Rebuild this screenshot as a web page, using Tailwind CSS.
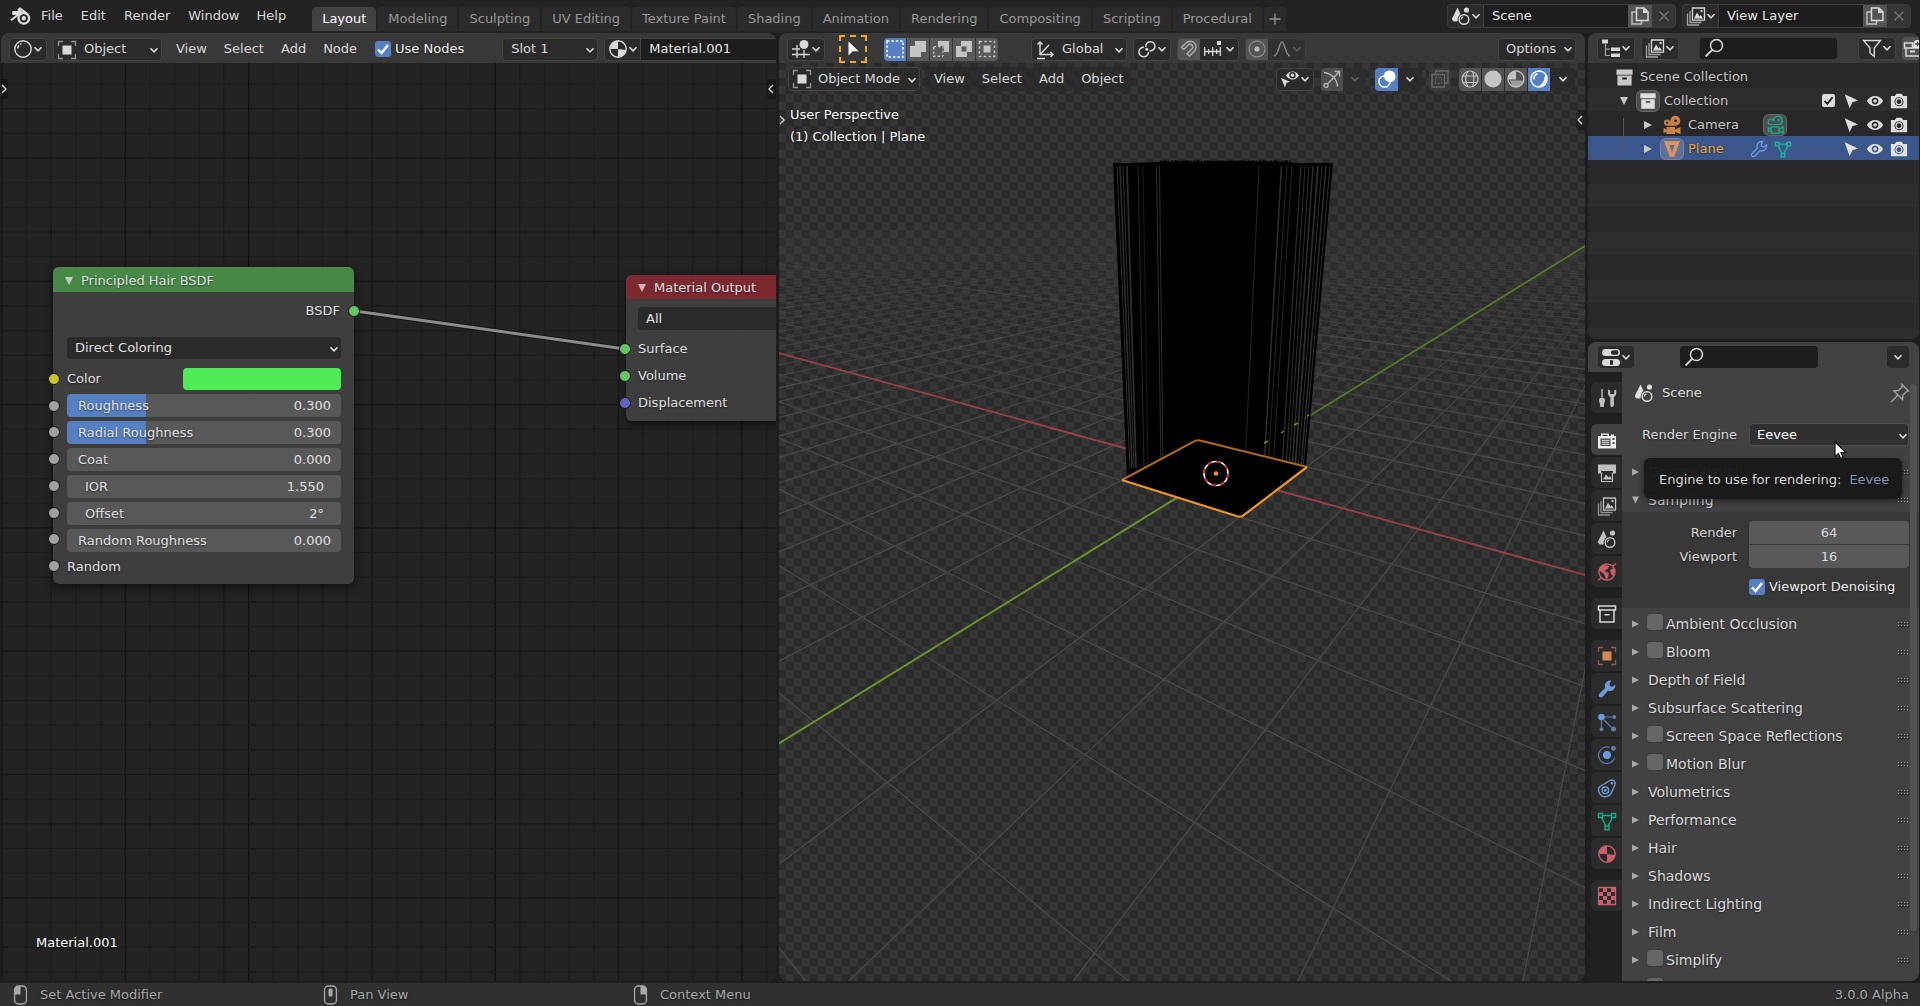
<!DOCTYPE html>
<html lang="en">
<head>
  <meta charset="UTF-8" />
  <title>Blender</title>
  <meta name="viewport" content="width=device-width, initial-scale=1.0" />
  <script src="https://cdn.jsdelivr.net/npm/@tailwindcss/browser@4"></script>
  <style>
    body { font-family: 'DejaVu Sans', 'Liberation Sans', sans-serif; }
  </style>
</head>

<body class="h-screen overflow-hidden flex flex-col bg-[#1e1e1e] text-[13px] leading-4 text-[#d9d9d9] [text-shadow:0_1px_2px_rgba(0,0,0,0.5)] cursor-default">

<!-- Icon set -->
<svg class="hidden">
  <symbol id="chev" viewBox="0 0 10 10"><path d="M1.5 3.2 5 6.8 8.5 3.2" fill="none" stroke="currentColor" stroke-width="1.6"/></symbol>
  <symbol id="check" viewBox="0 0 16 16"><path d="M3 8.5 6.5 12 13 4" fill="none" stroke="currentColor" stroke-width="2.4"/></symbol>
  <symbol id="blender" viewBox="0 0 22 20"><path d="M1 14.2 9 8H3.2V6H11L8.4 3.8 10 2.4l8 6.2" fill="none" stroke="currentColor" stroke-width="2" stroke-linejoin="round"/><circle cx="13.8" cy="12.3" r="5.3" fill="none" stroke="currentColor" stroke-width="2.3"/><circle cx="13.8" cy="12.3" r="2.2" fill="currentColor"/></symbol>
  <symbol id="shader" viewBox="0 0 20 20"><circle cx="10" cy="10" r="8.2" fill="none" stroke="currentColor" stroke-width="1.4"/><path d="M4.8 9.5A5.3 5.3 0 0 1 6 6.3M7.2 5.4l1.3-.8" fill="none" stroke="currentColor" stroke-width="1.7"/></symbol>
  <symbol id="object" viewBox="0 0 20 20"><path d="M5.5 5.5h9v9h-9z" fill="currentColor"/><path d="M1.5 6V1.5H6M14 1.5h4.500V6M18.500 14v4.500H14M6 18.500H1.500V14" fill="none" stroke="currentColor" stroke-width="1.3" opacity=".6"/></symbol>
  <symbol id="material" viewBox="0 0 20 20"><circle cx="10" cy="10" r="8.2" fill="none" stroke="currentColor" stroke-width="1.4"/><path d="M10 10H2a8 8 0 0 1 8-8zM10 10l8 1a8 8 0 0 1-8 7z" fill="currentColor"/></symbol>
  <symbol id="view3d" viewBox="0 0 20 20"><circle cx="13" cy="5.500" r="4.500" fill="currentColor"/><path d="M6 6v13M13 11v8M1 10h8M1 15.500h18" fill="none" stroke="currentColor" stroke-width="1.3"/></symbol>
  <symbol id="cursor" viewBox="0 0 20 20"><path d="M5.500 2.500v14l4.200-4.300h6z" fill="currentColor"/></symbol>
  <symbol id="pick" viewBox="0 0 20 20"><path d="M3 2.500 18 9.500l-6.500 2L8.500 18z" fill="currentColor"/></symbol>
  <symbol id="selnew" viewBox="0 0 20 20"><path d="M2 2h16v16H2z" fill="none" stroke="currentColor" stroke-width="1.600" stroke-dasharray="2.400 2"/></symbol>
  <symbol id="selext" viewBox="0 0 20 20"><path d="M7 2h11v11h-5v5H2V7h5z" fill="currentColor"/></symbol>
  <symbol id="selsub" viewBox="0 0 20 20"><path d="M7 2h11v11h-5V7H7z" fill="currentColor"/><path d="M2.700 8v9.300h9.300" fill="none" stroke="currentColor" stroke-width="1.500" stroke-dasharray="2.400 2"/><path d="M2.700 7.700h9.300V17" fill="none" stroke="currentColor" stroke-width="1.200" stroke-dasharray="2.400 2"/></symbol>
  <symbol id="selinv" viewBox="0 0 20 20"><path fill-rule="evenodd" d="M7 2h11v11h-5v5H2V7h5zM7.500 7.500v5h5v-5z" fill="currentColor"/></symbol>
  <symbol id="selint" viewBox="0 0 20 20"><path d="M6.500 6.500h7v7h-7z" fill="currentColor"/><path d="M2.500 2.500h15v15h-15z" fill="none" stroke="currentColor" stroke-width="1.500" stroke-dasharray="2.400 2.400"/></symbol>
  <symbol id="orient" viewBox="0 0 20 20"><path d="M5 2v12.500h13M5 14.500 14 5M2.500 4.500 5 2l2.500 2.500M15.500 12l2.500 2.500-2.500 2.500M10 18.500H2" fill="none" stroke="currentColor" stroke-width="1.400"/></symbol>
  <symbol id="pivot" viewBox="0 0 20 20"><path d="M12.500 11.800A4.600 4.600 0 1 0 8.800 8M7 8.200A4.800 4.800 0 1 0 11.500 13" fill="none" stroke="currentColor" stroke-width="1.500"/><circle cx="9.800" cy="10.300" r="1.500" fill="currentColor"/></symbol>
  <symbol id="magnet" viewBox="0 0 20 20"><path d="M2.500 8.200 7 4a5.800 5.800 0 0 1 8.500 8l-5 5-2.400-2.200 4.900-5a2.600 2.600 0 0 0-3.800-3.700L4.800 10.500z" fill="none" stroke="currentColor" stroke-width="1.500"/></symbol>
  <symbol id="snap" viewBox="0 0 20 20"><path d="M14 2h4v4h-4z" fill="currentColor"/><path d="M1 12.500h17M1.700 8v9M5.700 10v5M9.700 8v9M13.700 10v5M17.300 8v9" fill="none" stroke="currentColor" stroke-width="1.300"/></symbol>
  <symbol id="prop" viewBox="0 0 20 20"><circle cx="10" cy="10" r="8" fill="none" stroke="currentColor" stroke-width="1.300" opacity=".5"/><circle cx="10" cy="10" r="2.600" fill="currentColor"/></symbol>
  <symbol id="curve" viewBox="0 0 20 20"><path d="M2 17C7 16 7 3 10 3s3 13 8 14" fill="none" stroke="currentColor" stroke-width="1.500"/></symbol>
  <symbol id="eyecur" viewBox="0 0 20 20"><path d="M6 6.500C9 1 16 1 19 6.500 16 12 9 12 6 6.500z" fill="currentColor"/><circle cx="12.500" cy="6.300" r="3.200" fill="#2b2b2b"/><circle cx="12.500" cy="6.300" r="1.700" fill="currentColor"/><path d="M1 9l9 3.800-3.500 1L5 18.500z" fill="currentColor"/></symbol>
  <symbol id="gizmo" viewBox="0 0 20 20"><path d="M2 3.500a15 15 0 0 1 13.500 14M5.500 15 17 3M12.500 2.500H17.500V7.500" fill="none" stroke="currentColor" stroke-width="1.400"/><circle cx="4" cy="16.500" r="2" fill="none" stroke="currentColor" stroke-width="1.300"/></symbol>
  <symbol id="overlay" viewBox="0 0 20 20"><circle cx="12.500" cy="7.500" r="6" fill="currentColor"/><circle cx="7.500" cy="12.500" r="5.600" fill="none" stroke="currentColor" stroke-width="1.400"/><path d="M6.700 8.500a6 6 0 0 0 4.800 4.900" fill="none" stroke="#5680c2" stroke-width="1.300"/></symbol>
  <symbol id="xray" viewBox="0 0 20 20"><path d="M6 5V2h12v12h-3" fill="none" stroke="currentColor" stroke-width="1.300"/><path d="M2 5.500h12.500V18H2z" fill="none" stroke="currentColor" stroke-width="1.300"/><path d="M5.500 8.500h6v6h-6z" fill="none" stroke="currentColor" stroke-dasharray="2 1.500"/></symbol>
  <symbol id="wire" viewBox="0 0 20 20"><g fill="none" stroke="currentColor" stroke-width="1.200"><circle cx="10" cy="10" r="8"/><path d="M2.500 7h15M2.500 13.500h15M8 2.200c-3 5-3 11 0 15.600M12.500 2.500c2 5 2 10 0 15"/></g></symbol>
  <symbol id="solid" viewBox="0 0 20 20"><circle cx="10" cy="10" r="8.500" fill="currentColor"/></symbol>
  <symbol id="matprev" viewBox="0 0 20 20"><circle cx="10" cy="10" r="8" fill="none" stroke="currentColor" stroke-width="1.300"/><path d="M10 10.500V2a8 8 0 0 0-8 8.500z" fill="currentColor"/><path d="M4 11.500h13.800A8 8 0 0 1 6 16.500z" fill="currentColor" opacity=".65"/></symbol>
  <symbol id="rendered" viewBox="0 0 20 20"><circle cx="10" cy="10" r="8" fill="none" stroke="currentColor" stroke-width="1.500"/><path d="M5 10.500A5.500 5.500 0 0 1 8.500 4.800" fill="none" stroke="currentColor" stroke-width="1.600"/><path d="M16 5.500a8 8 0 0 1-9 11.800c5 .2 8.800-5 9-11.800z" fill="currentColor"/></symbol>
  <symbol id="scene" viewBox="0 0 20 20"><path d="M6.500 1.500 9.500 8c-2 1.500-3 4-2.800 7-2 1.200-5.700.8-5.700-2.500z" fill="currentColor"/><circle cx="15.500" cy="4" r="2.600" fill="currentColor"/><circle cx="13" cy="13.500" r="4.800" fill="none" stroke="currentColor" stroke-width="1.400"/><path d="M10.300 13.500a2.800 2.800 0 0 1 2-2.700" fill="none" stroke="currentColor" stroke-width="1.200"/></symbol>
  <symbol id="copy" viewBox="0 0 20 20"><path d="M6.500 2H14l4 4v8.500H6.500z" fill="none" stroke="currentColor" stroke-width="1.500"/><path d="M13 2v5h5z" fill="currentColor"/><path d="M6 6H2v12h9.500v-3" fill="none" stroke="currentColor" stroke-width="1.400" opacity=".8"/></symbol>
  <symbol id="x" viewBox="0 0 20 20"><path d="M5.500 5.500l9 9M14.500 5.500l-9 9" fill="none" stroke="currentColor" stroke-width="1.300"/></symbol>
  <symbol id="layers" viewBox="0 0 20 20"><path d="M6.500 2h12v12.200h-12z" fill="none" stroke="currentColor" stroke-width="1.300"/><path d="M8 12.500l3-6 2.500 4 1.200-1.500 2.300 3.500z" fill="currentColor"/><circle cx="15.500" cy="5" r="1.200" fill="currentColor"/><path d="M4 5v11.500h11.500M1.500 7.500V19H13" fill="none" stroke="currentColor" stroke-width="1.300" opacity=".7"/></symbol>
  <symbol id="outliner" viewBox="0 0 20 20"><path d="M1 1.500h6v4H1zM10 9.500h9V13h-9zM10 15.500h9V19h-9z" fill="currentColor"/><path d="M4.500 6v11.500H9M4.500 11.200H9" fill="none" stroke="currentColor" stroke-width="1.200" opacity=".7"/></symbol>
  <symbol id="search" viewBox="0 0 20 20"><circle cx="12.500" cy="7.500" r="6" fill="none" stroke="currentColor" stroke-width="1.500"/><path d="M8.200 11.800 1.500 18.500" stroke="currentColor" stroke-width="1.800"/></symbol>
  <symbol id="filter" viewBox="0 0 20 20"><path d="M1.500 2.500h17L12.300 10v8.500L8 15v-5z" fill="none" stroke="currentColor" stroke-width="1.400"/></symbol>
  <symbol id="newcol" viewBox="0 0 20 20"><path d="M2.500 5h8v3.500h7V10h-15zM4 10v8h13" fill="none" stroke="currentColor" stroke-width="1.500"/><path d="M8 13.500h5" stroke="currentColor" stroke-width="2"/><circle cx="15.500" cy="6" r="4" fill="#eee"/><path d="M15.500 3.500v5M13 6h5" stroke="#444" stroke-width="1.300"/></symbol>
  <symbol id="collection" viewBox="0 0 20 20"><path d="M1.500 1.500h17V7h-17z" fill="currentColor"/><path fill-rule="evenodd" d="M2.500 8h15v10.500h-15zM7.500 10v2h5v-2z" fill="currentColor"/></symbol>
  <symbol id="collout" viewBox="0 0 20 20"><path d="M1.500 2h17v4h-17zM3 6v12h14V6" fill="none" stroke="currentColor" stroke-width="1.500"/><path d="M7.500 10h5v1.500h-5z" fill="currentColor"/></symbol>
  <symbol id="camera" viewBox="0 0 20 20"><path fill-rule="evenodd" d="M5 4.500a3.500 3.500 0 0 1 3.400 2A5 5 0 1 1 14 10.700H5A3.100 3.100 0 0 1 5 4.500zM5 6.500a1.200 1.200 0 1 0 .1 0zM13.500 4.300a1.500 1.500 0 1 0 .1 0zM4.500 12H13v2.500l5.500-2.500v7L13 17v2H4.500v-2L1.500 18v-5l3 1.500z" fill="currentColor"/></symbol>
  <symbol id="camdata" viewBox="0 0 20 20"><g fill="none" stroke="currentColor" stroke-width="1.300"><path d="M4.500 4.500a3 3 0 0 1 3.500 1.800A4.500 4.500 0 1 1 14 10H4.500a2.800 2.800 0 0 1 0-5.500z"/><path d="M5.500 12.500h8V19h-8zM13.500 15l4.500-2.500v6.500L13.500 17M5.500 15 2.500 13.500v4l3-1"/></g><circle cx="13.500" cy="5.500" r="1.200" fill="currentColor"/></symbol>
  <symbol id="plane" viewBox="0 0 20 20"><path fill-rule="evenodd" d="M1 1h18l-6.500 18h-5zM7 5.500 10 14l3-8.500z" fill="currentColor"/></symbol>
  <symbol id="mesh" viewBox="0 0 20 20"><g fill="none" stroke="currentColor" stroke-width="1.400"><path d="M1.500 2.500h4v4h-4zM14.500 2.500h4v4h-4zM8 15h4v3.800H8zM5.500 4.500h9M4.500 6.500 9 15M15.500 6.500 11 15"/></g></symbol>
  <symbol id="wrench" viewBox="0 0 20 20"><path d="M18.300 5.500a5.500 5.500 0 0 1-7.300 6.300L5.500 17.800c-2 2-5-.8-3.200-3L8.200 9a5.500 5.500 0 0 1 6-7.500L12.500 5l.5 2.200 2.200.500z" fill="currentColor"/></symbol>
  <symbol id="wrenchout" viewBox="0 0 20 20"><path d="M18.300 5.500a5.500 5.500 0 0 1-7.300 6.300L5.500 17.800c-2 2-5-.8-3.200-3L8.200 9a5.500 5.500 0 0 1 6-7.500L12.500 5l.5 2.200 2.200.500z" fill="none" stroke="currentColor" stroke-width="1.400"/></symbol>
  <symbol id="eye" viewBox="0 0 20 20"><path fill-rule="evenodd" d="M1 10C5 2.500 15 2.500 19 10 15 17.500 5 17.500 1 10zM10 6.200a3.800 3.800 0 1 0 .1 0z" fill="currentColor"/><circle cx="10" cy="10" r="2" fill="currentColor"/></symbol>
  <symbol id="photo" viewBox="0 0 20 20"><path fill-rule="evenodd" d="M1 4.500h4.500L7 2h6l1.500 2.500H19V18H1zM10 5.700a5 5 0 1 0 .1 0z" fill="currentColor"/><circle cx="10" cy="10.700" r="3.300" fill="none" stroke="currentColor" stroke-width="1.300"/></symbol>
  <symbol id="props" viewBox="0 0 20 20"><rect x="1" y="2" width="18" height="7" rx="3.500" fill="currentColor"/><rect x="10" y="3.200" width="7.500" height="4.600" rx="2.200" fill="#2b2b2b"/><rect x="1" y="12" width="18" height="7" rx="3.500" fill="currentColor"/><rect x="9" y="13.200" width="3" height="4.600" fill="#2b2b2b"/></symbol>
  <symbol id="tool" viewBox="0 0 20 20"><path d="M5 1v8" stroke="currentColor" stroke-width="1.400"/><path d="M2 12.500c0-2 1-3 3-3s3 1 3 3-1 2-1 4 0 2.500-2 2.500-2-.5-2-2.500-1-2-1-4z" fill="currentColor"/><path d="M11 1.500v4c0 2 1.500 3 2.300 3.500v8c0 2.500 3.600 2.500 3.600 0V9c.8-.5 2.300-1.500 2.300-3.500v-4l-2 1v3.500h-4V2.500z" fill="currentColor"/></symbol>
  <symbol id="render" viewBox="0 0 20 20"><path fill-rule="evenodd" d="M1 6h3V3.500h8V6h2V4.500h3V6h2v12.500H1zM5.500 4.700V6h5V4.700zM3.500 8.500v7.500h10V8.500zM15.500 8v2h2V8zM15.500 12v2h2v-2z" fill="currentColor"/><path d="M4.500 10.300h8M4.500 12.300h8M4.500 14.300h8" stroke="currentColor"/></symbol>
  <symbol id="output" viewBox="0 0 20 20"><path d="M1 1.500h18v9h-3V8H4v2.500H1z" fill="currentColor"/><path d="M4.500 9.500v9h11v-9" fill="none" stroke="currentColor" stroke-width="1.200"/><path d="M6 16.500l3-5 2.500 3 1.500-1.500 2 3.500z" fill="currentColor"/></symbol>
  <symbol id="world" viewBox="0 0 20 20"><circle cx="10" cy="10" r="8" fill="none" stroke="currentColor" stroke-width="1.400"/><path d="M3 5l4-2 5 1-1 3-3 1 1 2 3 1-1 5-2 1-2-5-4-3zM13 8l4-2 1 5-2 3-2-2z" fill="currentColor"/><path d="M15.500 4.500 19 1.500M4.500 15.500 1 18.500" stroke="currentColor" stroke-width="1.500"/></symbol>
  <symbol id="particles" viewBox="0 0 20 20"><circle cx="4.500" cy="5" r="3.300" fill="currentColor"/><g opacity=".75"><path d="M8 5h9M4.500 8v9M7 8l8.500 8.500" stroke="currentColor" stroke-width="1.200"/><circle cx="17.300" cy="5" r="1.900" fill="currentColor"/><circle cx="4.500" cy="17.300" r="1.900" fill="currentColor"/><circle cx="16.500" cy="17" r="2.500" fill="currentColor"/></g></symbol>
  <symbol id="physics" viewBox="0 0 20 20"><circle cx="10" cy="10" r="4" fill="currentColor"/><path d="M12.500 2.300A8.300 8.300 0 1 0 17.800 12.500" fill="none" stroke="currentColor" stroke-width="1.300" opacity=".75"/><circle cx="16.500" cy="3.500" r="2.400" fill="currentColor" opacity=".75"/></symbol>
  <symbol id="constraint" viewBox="0 0 20 20"><g fill="none" stroke="currentColor" stroke-width="1.400"><path d="M2.300 9 13 2.500a3.400 3.400 0 0 1 5 4L14.300 15a6.300 6.300 0 1 1-12-6z"/><circle cx="8.300" cy="12.300" r="3.300"/></g><circle cx="8.300" cy="12.300" r="1.400" fill="currentColor"/><circle cx="15" cy="5.300" r="1.300" fill="currentColor"/></symbol>
  <symbol id="texture" viewBox="0 0 20 20"><path d="M1.500 1.500h17v17h-17z" fill="none" stroke="currentColor" stroke-width="1.300"/><path d="M6 2h4v4H6zM14 2h4v4h-4zM2 6h4v4H2zM10 6h4v4h-4zM6 10h4v4H6zM14 10h4v4h-4zM2 14h4v4H2zM10 14h4v4h-4z" fill="currentColor"/></symbol>
  <symbol id="pin" viewBox="0 0 20 20"><path d="M12 1.500 18.500 8l-2 .5-3.500 3.500-.500 4.500L4 8l4.500-.5L12 4zM8 12l-7 7" fill="none" stroke="currentColor" stroke-width="1.300"/></symbol>
  <symbol id="mouse" viewBox="0 0 14 20"><rect x="1" y="1" width="12" height="18" rx="4" fill="none" stroke="currentColor" stroke-width="1.400"/></symbol>
  <symbol id="grip" viewBox="0 0 11 6"><path d="M0 1.500h11M0 4.500h11" stroke="#9a9a9a" stroke-dasharray="1 2"/><path d="M1 2.500h10M1 5.500h10" stroke="#1c1c1c" stroke-dasharray="1 2"/></symbol>
</svg>

<!-- Top bar -->
<header class="h-[33px] shrink-0 flex items-start bg-[#232323] pl-[10px] pr-[9px]">
  <svg class="w-[22px] h-5 mt-[6px] text-[#e0e0e0]"><use href="#blender"/></svg>
  <nav class="flex h-[31px] items-center">
    <button class="px-[9px]">File</button>
    <button class="px-[9px]">Edit</button>
    <button class="px-[9px]">Render</button>
    <button class="px-[9px]">Window</button>
    <button class="px-2">Help</button>
  </nav>
  <div class="flex gap-[2px] mt-[7px] ml-[18px] text-[#989898]">
    <button class="h-6 px-[10px] rounded-t bg-[#424242] text-white">Layout</button>
    <button class="h-6 px-[10px] rounded-t bg-[#2b2b2b]">Modeling</button>
    <button class="h-6 px-[10px] rounded-t bg-[#2b2b2b]">Sculpting</button>
    <button class="h-6 px-[10px] rounded-t bg-[#2b2b2b]">UV Editing</button>
    <button class="h-6 px-[10px] rounded-t bg-[#2b2b2b]">Texture Paint</button>
    <button class="h-6 px-[10px] rounded-t bg-[#2b2b2b]">Shading</button>
    <button class="h-6 px-[10px] rounded-t bg-[#2b2b2b]">Animation</button>
    <button class="h-6 px-[10px] rounded-t bg-[#2b2b2b]">Rendering</button>
    <button class="h-6 px-[10px] rounded-t bg-[#2b2b2b]">Compositing</button>
    <button class="h-6 px-[10px] rounded-t bg-[#2b2b2b]">Scripting</button>
    <button class="h-6 px-[10px] rounded-t bg-[#2b2b2b]">Procedural</button>
    <button class="h-6 w-[22px] rounded-t bg-[#2b2b2b] flex items-center justify-center" aria-label="Add workspace">
      <svg class="w-4 h-4" viewBox="0 0 16 16"><path d="M8 2.500v11M2.500 8h11" stroke="currentColor" stroke-width="1.300"/></svg>
    </button>
  </div>
  <div class="flex gap-[6px] ml-auto mt-1">
    <div class="flex h-6 rounded border border-[#3d3d3d] bg-[#2b2b2b] overflow-hidden">
      <button class="w-9 flex items-center justify-center border-r border-[#3d3d3d]" aria-label="Browse scene"><svg class="w-5 h-5"><use href="#scene"/></svg><svg class="w-[10px] h-[10px]"><use href="#chev"/></svg></button>
      <input class="w-36 bg-[#1d1d1d] pl-2 text-[#e6e6e6] outline-none" value="Scene" aria-label="Scene" />
      <button class="w-6 bg-[#545454] flex items-center justify-center" aria-label="New scene"><svg class="w-5 h-5"><use href="#copy"/></svg></button>
      <button class="w-[23px] bg-[#353535] text-[#777] flex items-center justify-center" aria-label="Delete scene"><svg class="w-5 h-5"><use href="#x"/></svg></button>
    </div>
    <div class="flex h-6 rounded border border-[#3d3d3d] bg-[#2b2b2b] overflow-hidden">
      <button class="w-9 flex items-center justify-center border-r border-[#3d3d3d]" aria-label="Browse view layer"><svg class="w-5 h-5"><use href="#layers"/></svg><svg class="w-[10px] h-[10px]"><use href="#chev"/></svg></button>
      <input class="w-36 bg-[#1d1d1d] pl-2 text-[#e6e6e6] outline-none" value="View Layer" aria-label="View layer" />
      <button class="w-6 bg-[#545454] flex items-center justify-center" aria-label="New view layer"><svg class="w-5 h-5"><use href="#copy"/></svg></button>
      <button class="w-[23px] bg-[#353535] text-[#777] flex items-center justify-center" aria-label="Delete view layer"><svg class="w-5 h-5"><use href="#x"/></svg></button>
    </div>
  </div>
</header>

<main class="flex-1 min-h-0 grid grid-cols-[775fr_806fr_331fr] grid-rows-[minmax(0,1fr)] gap-[3px] px-px pb-[2px]">

  <!-- Shader editor -->
  <section class="relative min-w-0 flex flex-col rounded-lg overflow-hidden bg-[#232323]">
    <div class="h-[30px] shrink-0 flex items-center bg-[#383838] pl-2 pt-[2px]">
      <button class="w-[38px] shrink-0 h-[23px] rounded border border-[#434343] bg-[#2b2b2b] flex items-center justify-center" aria-label="Editor type"><svg class="w-5 h-5"><use href="#shader"/></svg><svg class="w-[10px] h-[10px]"><use href="#chev"/></svg></button>
      <div class="relative ml-[6px] w-[109px] shrink-0">
        <select class="appearance-none w-full h-[23px] rounded border border-[#434343] bg-[#2b2b2b] pl-[30px] outline-none" aria-label="Shader type"><option>Object</option></select>
        <svg class="absolute left-1 top-[2px] w-5 h-5 pointer-events-none"><use href="#object"/></svg>
        <svg class="absolute right-[3px] top-[7px] w-[10px] h-[10px] pointer-events-none"><use href="#chev"/></svg>
      </div>
      <nav class="flex ml-[5px]">
        <button class="px-[9px]">View</button>
        <button class="px-2">Select</button>
        <button class="px-[9px]">Add</button>
        <button class="px-2">Node</button>
      </nav>
      <label class="flex items-center ml-[10px] shrink-0 text-[#f0f0f0]">
        <span class="relative w-4 h-4 mr-1">
          <input type="checkbox" checked class="appearance-none block w-4 h-4 rounded-[3px] bg-[#5680c2]" />
          <svg class="absolute inset-0 w-4 h-4 text-white"><use href="#check"/></svg>
        </span>
        Use Nodes
      </label>
      <div class="relative ml-[38px] w-24 shrink-0">
        <select class="appearance-none w-full h-[23px] rounded border border-[#434343] bg-[#2b2b2b] pl-2 outline-none" aria-label="Material slot"><option>Slot 1</option></select>
        <svg class="absolute right-[3px] top-[7px] w-[10px] h-[10px] pointer-events-none"><use href="#chev"/></svg>
      </div>
      <div class="flex-1 min-w-0 ml-[6px] flex h-[23px] rounded-l border border-r-0 border-[#434343] bg-[#2b2b2b]">
        <button class="w-9 shrink-0 flex items-center justify-center border-r border-[#434343]" aria-label="Browse material"><svg class="w-5 h-5"><use href="#material"/></svg><svg class="w-[10px] h-[10px]"><use href="#chev"/></svg></button>
        <input class="flex-1 min-w-0 bg-[#1d1d1d] pl-2 text-[#e6e6e6] outline-none" value="Material.001" aria-label="Material" />
      </div>
    </div>

    <div class="relative flex-1 min-h-0 overflow-hidden">
      <svg id="node-grid" class="absolute left-0 top-0 w-full h-full"></svg>
      <button class="absolute left-0 top-4 w-[7px] h-5 rounded-r bg-black/30 flex items-center" aria-label="Show toolbar"><svg class="w-[7px] h-3" viewBox="0 0 7 12"><path d="M1 2l4 4-4 4" fill="none" stroke="currentColor" stroke-width="1.300"/></svg></button>
      <button class="absolute right-0 top-4 w-[9px] h-5 rounded-l bg-black/30 flex items-center" aria-label="Show sidebar"><svg class="w-[7px] h-3" viewBox="0 0 7 12"><path d="M6 2 2 6l4 4" fill="none" stroke="currentColor" stroke-width="1.300"/></svg></button>

      <!-- Principled Hair BSDF -->
      <article class="absolute left-[52px] top-[204px] w-[301px] h-[317px] rounded-md bg-[#404040]/95 shadow-[0_3px_8px_rgba(0,0,0,0.6)] text-[#e0e0e0]">
        <h2 class="h-[25px] pt-[2px] flex items-center rounded-t-md bg-[#478a47] pl-3"><svg class="w-2 h-2 mr-2 text-[#b9d3b9]" viewBox="0 0 8 8"><path d="M0 0h8L4 8z" fill="currentColor"/></svg>Principled Hair BSDF</h2>
        <div class="h-9 pt-[2px] pr-[14px] flex items-center justify-end">BSDF</div>
        <div class="pl-[14px] pr-[13px] pt-[9px]">
          <div class="relative">
            <select class="appearance-none w-full h-[22px] rounded bg-[#2a2a2a] pl-2 outline-none" aria-label="Coloring"><option>Direct Coloring</option></select>
            <svg class="absolute right-[2px] top-[7px] w-[10px] h-[10px] pointer-events-none"><use href="#chev"/></svg>
          </div>
          <div class="flex items-center justify-between h-[22px] mt-[9px]">Color <button class="w-[158px] h-[22px] rounded bg-[#50ec57]" aria-label="Color"></button></div>
          <div class="flex flex-col gap-1 mt-1">
            <label class="h-[23px] rounded bg-[linear-gradient(90deg,#5680c2_29%,#585858_29%)] flex items-center pl-[11px] pr-[10px] whitespace-nowrap">Roughness<input class="flex-1 min-w-0 text-right outline-none" value="0.300" /></label>
            <label class="h-[23px] rounded bg-[linear-gradient(90deg,#5680c2_29%,#585858_29%)] flex items-center pl-[11px] pr-[10px] whitespace-nowrap">Radial Roughness<input class="flex-1 min-w-0 text-right outline-none" value="0.300" /></label>
            <label class="h-[23px] rounded bg-[#585858] flex items-center pl-[11px] pr-[10px] whitespace-nowrap">Coat<input class="flex-1 min-w-0 text-right outline-none" value="0.000" /></label>
            <label class="h-[23px] rounded bg-[#585858] flex items-center pl-[18px] pr-[17px] whitespace-nowrap">IOR<input class="flex-1 min-w-0 text-right outline-none" value="1.550" /></label>
            <label class="h-[23px] rounded bg-[#585858] flex items-center pl-[18px] pr-[17px] whitespace-nowrap">Offset<input class="flex-1 min-w-0 text-right outline-none" value="2°" /></label>
            <label class="h-[23px] rounded bg-[#585858] flex items-center pl-[11px] pr-[10px] whitespace-nowrap">Random Roughness<input class="flex-1 min-w-0 text-right outline-none" value="0.000" /></label>
            <div class="h-[21px] flex items-center">Random</div>
          </div>
        </div>
      </article>

      <!-- Material Output -->
      <article class="absolute left-[625px] top-[212px] w-[190px] h-[146px] rounded-md bg-[#404040]/95 shadow-[0_3px_8px_rgba(0,0,0,0.6)] text-[#e0e0e0]">
        <h2 class="h-6 pt-[2px] flex items-center rounded-t-md bg-[#7d2930] pl-3"><svg class="w-2 h-2 mr-2 text-[#d8b4b7]" viewBox="0 0 8 8"><path d="M0 0h8L4 8z" fill="currentColor"/></svg>Material Output</h2>
        <div class="px-3 pt-2">
          <select class="appearance-none w-full h-[23px] rounded bg-[#2a2a2a] pl-2 outline-none" aria-label="Target"><option>All</option></select>
          <ul class="mt-[5px]">
            <li class="h-[27px] flex items-center">Surface</li>
            <li class="h-[27px] flex items-center">Volume</li>
            <li class="h-[27px] flex items-center">Displacement</li>
          </ul>
        </div>
      </article>

      <!-- Link and sockets, origin is the top left of the node canvas -->
      <svg class="absolute left-0 top-0 w-full h-full pointer-events-none">
        <path d="M354 248 624 286" stroke="#161616" stroke-width="5"/>
        <path d="M354 248 624 286" stroke="#8c8c8c" stroke-width="3"/>
        <g stroke="#111" stroke-width="1">
          <g fill="#63c763"><circle cx="353" cy="248" r="5.500"/><circle cx="624" cy="286" r="5.500"/><circle cx="624" cy="313" r="5.500"/></g>
          <circle cx="624" cy="340" r="5.500" fill="#6363c7"/>
          <circle cx="53" cy="316" r="5.500" fill="#c7c729"/>
          <g fill="#a1a1a1"><circle cx="53" cy="343" r="5.500"/><circle cx="53" cy="369" r="5.500"/><circle cx="53" cy="396" r="5.500"/><circle cx="53" cy="423" r="5.500"/><circle cx="53" cy="450" r="5.500"/><circle cx="53" cy="476" r="5.500"/><circle cx="53" cy="503" r="5.500"/></g>
        </g>
      </svg>
      <p class="absolute left-[35px] bottom-[30px] text-white">Material.001</p>
    </div>
  </section>

  <!-- 3D viewport -->
  <section class="relative min-w-0 flex flex-col rounded-lg overflow-hidden bg-[conic-gradient(#353535_25%,#2b2b2b_0_50%,#353535_0_75%,#2b2b2b_0)] bg-[size:16px_16px] bg-[position:7px_5px]">
    <svg class="absolute left-0 top-0 w-full h-full" viewBox="779 33 806 948" preserveAspectRatio="xMidYMid slice">
      <defs>
        <linearGradient id="fade" gradientUnits="userSpaceOnUse" x1="0" y1="200" x2="0" y2="440">
          <stop offset="0" stop-color="#000"/><stop offset="0.300" stop-color="#444"/><stop offset="1" stop-color="#fff"/>
        </linearGradient>
        <mask id="fademask" maskUnits="userSpaceOnUse" x="779" y="33" width="806" height="948"><path d="M779 33h806v948H779z" fill="url(#fade)"/></mask>
      </defs>
      <g id="floor" mask="url(#fademask)" stroke="#484848" stroke-width="1.400"></g>
      <path d="M779 353 1585 575" stroke="#98404c" stroke-width="1.800"/>
      <path d="M779 743.500 1216 473.500" stroke="#6c932c" stroke-width="2"/>
      <path d="M1216 473.500 1585 246" stroke="#587827" stroke-width="1.800"/>
      <!-- Hair strands -->
      <path d="M1129 163 1160 162 1230 161 1280 162 1302 163 1284 470 1240 517 1133 478z" fill="#000"/>
      <path d="M1113 163h20l6 310-12 5zM1300 163h33l-27 303-26 1z" fill="#000"/>
      <path d="M1160 161.500h130" stroke="#000" stroke-width="2" stroke-dasharray="2 1 4 1 1 2"/>
      <g id="slits" stroke="#2e2e2e" fill="none"></g>
      <path d="M1122 480 1197 440 1307 467 1240 517z" fill="#000"/>
      <path d="M1122 480 1194 441.500Q1197 439.500 1200 440.500L1307 467" fill="none" stroke="#b06a1e" stroke-width="2"/>
      <path d="M1307 467 1242 516.500 1238 516.500 1122 480" fill="none" stroke="#f0932b" stroke-width="2.200"/>
      <path d="M1307 416l2-1M1294 425l4-2M1281 433l3-2M1264 443l4-2" stroke="#6c932c" stroke-width="1.500"/>
      <circle cx="1216" cy="473.500" r="12" fill="none" stroke="#fff" stroke-width="1.600"/>
      <circle cx="1216" cy="473.500" r="12" fill="none" stroke="#e8101c" stroke-width="1.600" stroke-dasharray="4.700 4.700"/>
      <circle cx="1216" cy="473.500" r="2.300" fill="#f0932b"/>
    </svg>

    <div class="relative h-[30px] shrink-0 flex items-center bg-[#383838] pl-2 pt-[2px] pr-[9px]">
      <button class="w-[38px] h-[23px] rounded border border-[#434343] bg-[#2b2b2b] flex items-center justify-center" aria-label="Editor type"><svg class="w-5 h-5"><use href="#view3d"/></svg><svg class="w-[10px] h-[10px]"><use href="#chev"/></svg></button>
      <button class="w-7 h-7 ml-[14px] border-2 border-dashed border-[#f5a623] flex items-center justify-center text-white" aria-label="Select tool"><svg class="w-5 h-5"><use href="#cursor"/></svg></button>
      <div class="flex ml-[17px] h-[23px] rounded overflow-hidden gap-px bg-[#383838] text-[#c4c4c4]">
        <button class="w-[22px] bg-[#5680c2] text-white flex items-center justify-center" aria-label="Set selection"><svg class="w-5 h-5"><use href="#selnew"/></svg></button>
        <button class="w-[22px] bg-[#595959] flex items-center justify-center" aria-label="Extend selection"><svg class="w-5 h-5"><use href="#selext"/></svg></button>
        <button class="w-[22px] bg-[#595959] flex items-center justify-center" aria-label="Subtract selection"><svg class="w-5 h-5"><use href="#selsub"/></svg></button>
        <button class="w-[22px] bg-[#595959] flex items-center justify-center" aria-label="Invert selection"><svg class="w-5 h-5"><use href="#selinv"/></svg></button>
        <button class="w-[22px] bg-[#595959] flex items-center justify-center" aria-label="Intersect selection"><svg class="w-5 h-5"><use href="#selint"/></svg></button>
      </div>
      <div class="relative ml-[33px] w-24">
        <select class="appearance-none w-full h-[23px] rounded border border-[#434343] bg-[#2b2b2b] pl-[30px] outline-none" aria-label="Orientation"><option>Global</option></select>
        <svg class="absolute left-1 top-[2px] w-5 h-5 pointer-events-none"><use href="#orient"/></svg>
        <svg class="absolute right-[3px] top-[7px] w-[10px] h-[10px] pointer-events-none"><use href="#chev"/></svg>
      </div>
      <button class="ml-[6px] w-[38px] h-[23px] rounded border border-[#434343] bg-[#2b2b2b] flex items-center justify-center" aria-label="Pivot point"><svg class="w-5 h-5"><use href="#pivot"/></svg><svg class="w-[10px] h-[10px]"><use href="#chev"/></svg></button>
      <div class="ml-[6px] flex h-[23px] rounded overflow-hidden border border-[#434343] bg-[#2b2b2b]">
        <button class="w-[22px] bg-[#545454] text-[#aaa] flex items-center justify-center" aria-label="Snap"><svg class="w-5 h-5"><use href="#magnet"/></svg></button>
        <button class="w-[38px] flex items-center justify-center" aria-label="Snap to"><svg class="w-5 h-5"><use href="#snap"/></svg><svg class="w-[10px] h-[10px] ml-[2px]"><use href="#chev"/></svg></button>
      </div>
      <div class="ml-[6px] flex h-[23px] rounded overflow-hidden border border-[#3e3e3e] bg-[#313131]">
        <button class="w-[22px] bg-[#545454] text-[#bbb] flex items-center justify-center" aria-label="Proportional editing"><svg class="w-5 h-5"><use href="#prop"/></svg></button>
        <button class="w-[37px] text-[#858585] flex items-center justify-center" aria-label="Falloff"><svg class="w-5 h-5"><use href="#curve"/></svg><svg class="w-[10px] h-[10px] opacity-50"><use href="#chev"/></svg></button>
      </div>
      <button class="ml-auto w-[78px] h-[23px] rounded border border-[#434343] bg-[#2b2b2b] flex items-center justify-between pl-[7px] pr-[2px]">Options<svg class="w-[10px] h-[10px]"><use href="#chev"/></svg></button>
    </div>

    <div class="relative flex items-center pt-1 pl-[9px] pr-[10px]">
      <div class="relative w-[132px]">
        <select class="appearance-none w-full h-6 rounded border border-[#434343] bg-[#2b2b2b] pl-[29px] outline-none" aria-label="Mode"><option>Object Mode</option></select>
        <svg class="absolute left-1 top-[2px] w-5 h-5 pointer-events-none"><use href="#object"/></svg>
        <svg class="absolute right-[3px] top-2 w-[10px] h-[10px] pointer-events-none"><use href="#chev"/></svg>
      </div>
      <nav class="flex ml-[5px]">
        <button class="px-[9px] h-6 rounded bg-[#2b2b2b]/70">View</button>
        <button class="px-2 h-6 rounded bg-[#2b2b2b]/70">Select</button>
        <button class="px-[9px] h-6 rounded bg-[#2b2b2b]/70">Add</button>
        <button class="px-2 h-6 rounded bg-[#2b2b2b]/70">Object</button>
      </nav>
      <button class="ml-auto w-[38px] h-[23px] rounded border border-[#434343] bg-[#2b2b2b] flex items-center justify-center" aria-label="Object visibility"><svg class="w-5 h-5"><use href="#eyecur"/></svg><svg class="w-[10px] h-[10px]"><use href="#chev"/></svg></button>
      <div class="ml-[7px] flex h-[23px] rounded overflow-hidden bg-[#2e2e2e]">
        <button class="w-[22px] bg-[#4d4d4d] text-[#b5b5b5] flex items-center justify-center" aria-label="Gizmos"><svg class="w-5 h-5"><use href="#gizmo"/></svg></button>
        <button class="w-[23px] flex items-center justify-center" aria-label="Gizmo options"><svg class="w-[10px] h-[10px] opacity-30"><use href="#chev"/></svg></button>
      </div>
      <div class="ml-[9px] flex h-[23px] rounded overflow-hidden bg-[#2b2b2b]">
        <button class="w-[23px] bg-[#5680c2] text-white flex items-center justify-center" aria-label="Overlays"><svg class="w-5 h-5"><use href="#overlay"/></svg></button>
        <button class="w-6 flex items-center justify-center" aria-label="Overlay options"><svg class="w-[10px] h-[10px]"><use href="#chev"/></svg></button>
      </div>
      <button class="ml-[7px] w-[22px] h-[23px] rounded bg-[#3a3a3a] text-[#6a6a6a] flex items-center justify-center" aria-label="X-ray"><svg class="w-5 h-5"><use href="#xray"/></svg></button>
      <div class="ml-2 flex h-[23px] rounded overflow-hidden gap-px bg-[#2b2b2b] text-[#c4c4c4]">
        <button class="w-[22px] bg-[#545454] flex items-center justify-center" aria-label="Wireframe"><svg class="w-5 h-5"><use href="#wire"/></svg></button>
        <button class="w-[22px] bg-[#545454] flex items-center justify-center" aria-label="Solid"><svg class="w-5 h-5"><use href="#solid"/></svg></button>
        <button class="w-[22px] bg-[#545454] flex items-center justify-center" aria-label="Material preview"><svg class="w-5 h-5"><use href="#matprev"/></svg></button>
        <button class="w-[22px] bg-[#5680c2] text-white flex items-center justify-center" aria-label="Rendered"><svg class="w-5 h-5"><use href="#rendered"/></svg></button>
        <button class="w-6 flex items-center justify-center text-[#e6e6e6]" aria-label="Shading options"><svg class="w-[10px] h-[10px]"><use href="#chev"/></svg></button>
      </div>
    </div>

    <div class="relative pt-[13px] pl-[11px] text-white leading-[22px]">
      <p>User Perspective</p>
      <p>(1) Collection | Plane</p>
    </div>
    <button class="absolute left-0 top-[77px] w-[7px] h-5 flex items-center" aria-label="Show toolbar"><svg class="w-[7px] h-3" viewBox="0 0 7 12"><path d="M1 2l4 4-4 4" fill="none" stroke="currentColor" stroke-width="1.300"/></svg></button>
    <button class="absolute right-0 top-[77px] w-[9px] h-5 rounded-l bg-black/30 flex items-center" aria-label="Show sidebar"><svg class="w-[7px] h-3" viewBox="0 0 7 12"><path d="M6 2 2 6l4 4" fill="none" stroke="currentColor" stroke-width="1.300"/></svg></button>
  </section>

  <div class="min-w-0 grid grid-rows-[306fr_639fr] gap-[3px]">

    <!-- Outliner -->
    <section class="min-h-0 flex flex-col rounded-lg overflow-hidden bg-[#282828]">
      <div class="h-[30px] shrink-0 flex items-center bg-[#3a3a3a] pl-[9px]">
        <button class="w-[38px] shrink-0 h-[23px] rounded border border-[#434343] bg-[#2b2b2b] flex items-center justify-center" aria-label="Editor type"><svg class="w-5 h-5"><use href="#outliner"/></svg><svg class="w-[10px] h-[10px]"><use href="#chev"/></svg></button>
        <button class="w-[38px] shrink-0 ml-[6px] h-[23px] rounded border border-[#434343] bg-[#2b2b2b] flex items-center justify-center" aria-label="Display mode"><svg class="w-5 h-5"><use href="#layers"/></svg><svg class="w-[10px] h-[10px]"><use href="#chev"/></svg></button>
        <label class="flex-1 min-w-0 ml-5 mr-5 h-[23px] rounded bg-[#1d1d1d] border border-[#343434] flex items-center pl-1">
          <svg class="w-5 h-5 shrink-0"><use href="#search"/></svg>
          <input class="min-w-0 flex-1 outline-none" type="search" aria-label="Filter outliner" />
        </label>
        <button class="w-[38px] shrink-0 h-[23px] rounded border border-[#434343] bg-[#2b2b2b] flex items-center justify-center" aria-label="Filter"><svg class="w-5 h-5"><use href="#filter"/></svg><svg class="w-[10px] h-[10px]"><use href="#chev"/></svg></button>
        <button class="w-[17px] shrink-0 ml-[6px] h-[23px] rounded-l bg-[#545454] flex items-center overflow-hidden" aria-label="New collection"><svg class="w-5 h-5 shrink-0"><use href="#newcol"/></svg></button>
      </div>
      <ul class="relative flex-1 pt-px bg-[repeating-linear-gradient(180deg,#282828_0_25px,#2d2d2d_25px_49px,#282828_49px_50px)] bg-[size:100%_48px] text-[#c8c8c8]">
        <li class="h-6 pt-[2px] flex items-center pl-[27px]"><svg class="w-[19px] h-[19px] mr-[6px]"><use href="#collection"/></svg>Scene Collection</li>
        <li class="h-6 pt-px flex items-center pl-8 pr-[11px]">
          <svg class="w-2 h-2 mr-2" viewBox="0 0 8 8"><path d="M0 0h8L4 8z" fill="currentColor"/></svg>
          <span class="w-6 h-[22px] rounded-md border border-[#666] bg-[#4d4d4d] flex items-center justify-center mr-1 text-[#e0e0e0]"><svg class="w-[18px] h-[18px]"><use href="#collection"/></svg></span>
          Collection
          <span class="ml-auto flex items-center gap-[6px] text-[#dcdcdc]">
            <span class="relative w-[13px] h-[13px] mr-[1px]">
              <input type="checkbox" checked class="appearance-none block w-[13px] h-[13px] rounded-[2px] bg-[#dcdcdc]" aria-label="Include collection" />
              <svg class="absolute inset-0 w-[13px] h-[13px] text-[#222]"><use href="#check"/></svg>
            </span>
            <svg class="w-[18px] h-[18px]"><use href="#pick"/></svg><svg class="w-[18px] h-[18px]"><use href="#eye"/></svg><svg class="w-[18px] h-[18px]"><use href="#photo"/></svg>
          </span>
        </li>
        <li class="h-6 pt-px flex items-center pl-14 pr-[11px]">
          <svg class="w-2 h-2 mr-2" viewBox="0 0 8 8"><path d="M0 0l8 4-8 4z" fill="currentColor"/></svg>
          <span class="w-6 flex justify-center mr-1 text-[#c98148]"><svg class="w-5 h-5"><use href="#camera"/></svg></span>
          Camera
          <span class="ml-6 w-6 h-[22px] rounded-md border border-[#666] bg-[#4d4d4d] flex items-center justify-center text-[#14b08d]"><svg class="w-[19px] h-[19px]"><use href="#camdata"/></svg></span>
          <span class="ml-auto flex items-center gap-[6px] text-[#dcdcdc]"><svg class="w-[18px] h-[18px]"><use href="#pick"/></svg><svg class="w-[18px] h-[18px]"><use href="#eye"/></svg><svg class="w-[18px] h-[18px]"><use href="#photo"/></svg></span>
        </li>
        <li class="h-6 pt-px flex items-center pl-14 pr-[11px] bg-[#3a568a]">
          <svg class="w-2 h-2 mr-2" viewBox="0 0 8 8"><path d="M0 0l8 4-8 4z" fill="currentColor"/></svg>
          <span class="w-6 h-[22px] rounded-md border border-[#7386a8] bg-[#5c7099] flex items-center justify-center mr-1 text-[#dd9264]"><svg class="w-[18px] h-[18px]"><use href="#plane"/></svg></span>
          <span class="text-[#f0a52c]">Plane</span>
          <svg class="w-[18px] h-[18px] ml-[26px] text-[#74a0e6]"><use href="#wrenchout"/></svg>
          <svg class="w-[18px] h-[18px] ml-[6px] text-[#14c09a]"><use href="#mesh"/></svg>
          <span class="ml-auto flex items-center gap-[6px] text-[#e0e0e0]"><svg class="w-[18px] h-[18px]"><use href="#pick"/></svg><svg class="w-[18px] h-[18px]"><use href="#eye"/></svg><svg class="w-[18px] h-[18px]"><use href="#photo"/></svg></span>
        </li>
        <li class="absolute left-[35px] top-[55px] w-px h-9 bg-[#555]" aria-hidden="true"></li>
      </ul>
    </section>

    <!-- Properties editor -->
    <section class="min-h-0 flex flex-col rounded-lg overflow-hidden bg-[#424242]">
      <div class="h-[30px] shrink-0 flex items-center justify-between pl-[10px] pr-[10px]">
        <button class="w-9 h-[22px] rounded bg-[#2b2b2b] flex items-center justify-center" aria-label="Editor type"><svg class="w-5 h-5"><use href="#props"/></svg><svg class="w-[10px] h-[10px]"><use href="#chev"/></svg></button>
        <label class="w-[138px] h-[22px] ml-5 rounded bg-[#1d1d1d] flex items-center pl-1">
          <svg class="w-5 h-5 shrink-0"><use href="#search"/></svg>
          <input class="min-w-0 flex-1 outline-none" type="search" aria-label="Search properties" />
        </label>
        <button class="w-[22px] h-[22px] ml-11 rounded bg-[#2b2b2b] flex items-center justify-center" aria-label="Options"><svg class="w-[10px] h-[10px]"><use href="#chev"/></svg></button>
      </div>
      <div class="flex-1 min-h-0 flex">
        <nav class="w-[34px] shrink-0 pl-[3px] pr-0 pt-[10px] bg-[#202020] flex flex-col gap-[2px] text-[#c0c0c0]">
          <button class="h-[31px] rounded-l-md bg-[#2b2b2b] flex items-center justify-center mb-[9px]" aria-label="Tool"><svg class="w-5 h-5"><use href="#tool"/></svg></button>
          <button class="h-[31px] rounded-l-md bg-[#424242] text-[#f0f0f0] flex items-center justify-center" aria-label="Render"><svg class="w-5 h-5"><use href="#render"/></svg></button>
          <button class="h-[31px] rounded-l-md bg-[#2b2b2b] flex items-center justify-center" aria-label="Output"><svg class="w-5 h-5"><use href="#output"/></svg></button>
          <button class="h-[31px] rounded-l-md bg-[#2b2b2b] flex items-center justify-center" aria-label="View layer"><svg class="w-5 h-5"><use href="#layers"/></svg></button>
          <button class="h-[31px] rounded-l-md bg-[#2b2b2b] flex items-center justify-center" aria-label="Scene"><svg class="w-5 h-5"><use href="#scene"/></svg></button>
          <button class="h-[31px] rounded-l-md bg-[#2b2b2b] text-[#c65f6a] flex items-center justify-center mb-[9px]" aria-label="World"><svg class="w-5 h-5"><use href="#world"/></svg></button>
          <button class="h-[31px] rounded-l-md bg-[#2b2b2b] text-[#d8d8d8] flex items-center justify-center mb-[9px]" aria-label="Collection"><svg class="w-5 h-5"><use href="#collout"/></svg></button>
          <button class="h-[31px] rounded-l-md bg-[#2b2b2b] text-[#ce8a52] flex items-center justify-center" aria-label="Object"><svg class="w-5 h-5"><use href="#object"/></svg></button>
          <button class="h-[31px] rounded-l-md bg-[#2b2b2b] text-[#6c9bdc] flex items-center justify-center" aria-label="Modifiers"><svg class="w-5 h-5"><use href="#wrench"/></svg></button>
          <button class="h-[31px] rounded-l-md bg-[#2b2b2b] text-[#6c9bdc] flex items-center justify-center" aria-label="Particles"><svg class="w-5 h-5"><use href="#particles"/></svg></button>
          <button class="h-[31px] rounded-l-md bg-[#2b2b2b] text-[#6c9bdc] flex items-center justify-center" aria-label="Physics"><svg class="w-5 h-5"><use href="#physics"/></svg></button>
          <button class="h-[31px] rounded-l-md bg-[#2b2b2b] text-[#6c9bdc] flex items-center justify-center" aria-label="Constraints"><svg class="w-5 h-5"><use href="#constraint"/></svg></button>
          <button class="h-[31px] rounded-l-md bg-[#2b2b2b] text-[#10b088] flex items-center justify-center" aria-label="Object data"><svg class="w-5 h-5"><use href="#mesh"/></svg></button>
          <button class="h-[31px] rounded-l-md bg-[#2b2b2b] text-[#c65f6a] flex items-center justify-center mb-[9px]" aria-label="Material"><svg class="w-5 h-5"><use href="#material"/></svg></button>
          <button class="h-[31px] rounded-l-md bg-[#2b2b2b] text-[#c65f6a] flex items-center justify-center" aria-label="Texture"><svg class="w-5 h-5"><use href="#texture"/></svg></button>
        </nav>

        <div class="relative flex-1 min-w-0 overflow-hidden">
          <div class="flex items-center h-5 mt-[11px] pl-3 pr-[9px] text-[#e0e0e0]">
            <svg class="w-5 h-5"><use href="#scene"/></svg><span class="ml-2">Scene</span>
            <svg class="w-5 h-5 ml-auto text-[#a8a8a8]"><use href="#pin"/></svg>
          </div>
          <div class="grid grid-cols-[115px_minmax(0,1fr)] gap-x-3 items-center mt-5 pr-[10px]">
            <label for="engine" class="text-right whitespace-nowrap">Render Engine</label>
            <div class="relative">
              <select id="engine" class="appearance-none w-full h-[23px] rounded border border-[#4d4d4d] bg-[#303030] text-white pl-[7px] outline-none"><option>Eevee</option></select>
              <svg class="absolute right-[1px] top-2 w-[10px] h-[10px] pointer-events-none"><use href="#chev"/></svg>
            </div>
          </div>

          <h3 class="h-7 mt-[10px] pt-[3px] flex items-center pl-[10px] pr-[10px] text-[14px]">
            <svg class="w-[7px] h-2 mr-[9px] text-[#a8a8a8]" viewBox="0 0 8 8"><path d="M0 0l8 4-8 4z" fill="currentColor"/></svg>Grease Pencil
            <svg class="w-[11px] h-[6px] ml-auto"><use href="#grip"/></svg>
          </h3>
          <h3 class="h-7 pt-[3px] flex items-center pl-[10px] pr-[10px] text-[14px]">
            <svg class="w-[7px] h-2 mr-[9px] text-[#a8a8a8]" viewBox="0 0 8 8"><path d="M0 0h8L4 8z" fill="currentColor"/></svg>Sampling
            <svg class="w-[11px] h-[6px] ml-auto"><use href="#grip"/></svg>
          </h3>
          <div class="h-24 bg-[#383838] pt-[9px] pr-[10px] grid grid-cols-[115px_minmax(0,1fr)] gap-x-3 items-center content-start">
            <label for="samples" class="text-right">Render</label>
            <input id="samples" class="w-full h-[23px] mb-px rounded-t bg-[#595959] text-center outline-none" value="64" />
            <label for="vsamples" class="text-right">Viewport</label>
            <input id="vsamples" class="w-full h-[23px] rounded-b bg-[#595959] text-center outline-none" value="16" />
            <label class="col-start-2 mt-[11px] flex items-center whitespace-nowrap text-[#eee]">
              <span class="relative w-4 h-4 mr-1">
                <input type="checkbox" checked class="appearance-none block w-4 h-4 rounded-[3px] bg-[#5680c2]" />
                <svg class="absolute inset-0 w-4 h-4 text-white"><use href="#check"/></svg>
              </span>
              Viewport Denoising
            </label>
          </div>
          <div id="panels"></div>

          <div class="absolute right-[2px] top-[12px] w-[7px] h-[547px] rounded bg-[#525252]"></div>
          <div role="tooltip" class="absolute left-[22px] right-[17px] top-[86px] h-[41px] pt-[2px] rounded-md bg-[#191919]/97 shadow-[0_2px_6px_rgba(0,0,0,0.5)] flex items-center pl-[15px] whitespace-nowrap">Engine to use for rendering:<span class="ml-2 text-[#8296b8]">Eevee</span></div>
          <svg class="absolute right-[71px] top-[69px] w-[14px] h-[19px]" viewBox="0 0 14 19"><path d="M1 1v14.500l3.500-3 2 5 2.700-1.200-2.200-4.800H12z" fill="#fff" stroke="#111" stroke-width="1.200"/></svg>
        </div>
      </div>
    </section>
  </div>
</main>

<!-- Status bar -->
<footer class="h-[23px] pt-px shrink-0 flex items-center bg-[#303030] text-[#a8a8a8] pl-[13px] pr-[11px]">
  <div class="w-[310px] flex items-center"><svg class="w-[15px] h-5" viewBox="0 0 14 20"><use href="#mouse"/><path d="M1 9.500V5a4 4 0 0 1 4-4h2v8.500z" fill="currentColor"/></svg><span class="ml-3">Set Active Modifier</span></div>
  <div class="w-[310px] flex items-center"><svg class="w-[15px] h-5" viewBox="0 0 14 20"><use href="#mouse"/><rect x="5" y="3.500" width="4" height="8" rx="1.500" fill="currentColor"/></svg><span class="ml-3">Pan View</span></div>
  <div class="flex items-center"><svg class="w-[15px] h-5" viewBox="0 0 14 20"><use href="#mouse"/><path d="M13 9.500V5a4 4 0 0 0-4-4H7v8.500z" fill="currentColor"/></svg><span class="ml-3">Context Menu</span></div>
  <span class="ml-auto">3.0.0 Alpha</span>
</footer>

<script>
  const line = (x1, y1, x2, y2, extra = "") =>
    `<line x1="${x1.toFixed(1)}" y1="${y1.toFixed(1)}" x2="${x2.toFixed(1)}" y2="${y2.toFixed(1)}" ${extra}/>`;

  // Collapsed render panels, true = has a checkbox
  const panels = [
    ["Ambient Occlusion", true],
    ["Bloom", true],
    ["Depth of Field", false],
    ["Subsurface Scattering", false],
    ["Screen Space Reflections", true],
    ["Motion Blur", true],
    ["Volumetrics", false],
    ["Performance", false],
    ["Hair", false],
    ["Shadows", false],
    ["Indirect Lighting", false],
    ["Film", false],
    ["Simplify", true],
    ["Freestyle", true]
  ];

  document.getElementById("panels").innerHTML = panels.map(([name, box]) => `
    <h3 class="h-7 pt-[3px] flex items-center pl-[10px] pr-[10px] text-[14px]">
      <svg class="w-[7px] h-2 mr-2 text-[#a8a8a8]" viewBox="0 0 8 8"><path d="M0 0l8 4-8 4z" fill="currentColor"/></svg>
      ${box ? `<label class="flex items-center whitespace-nowrap"><input type="checkbox" class="appearance-none w-4 h-4 mr-[3px] -mt-[3px] rounded-[3px] bg-[#666] shadow-[0_0_1px_#222]" />${name}</label>` : `<span class="ml-px">${name}</span>`}
      <svg class="w-[11px] h-[6px] ml-auto"><use href="#grip"/></svg>
    </h3>`).join("");

  // Node canvas grid, every fifth line is a major one
  const step = 24.66;
  let grid = "";
  for (let i = 0; i < 90; i++) {
    const major = i % 5 === 0;
    grid += line(1 + i * step, 0, 1 + i * step, 2000, `stroke="${i % 10 === 0 && i ? "#101010" : major ? "#161616" : "#1d1d1d"}" stroke-width="1.200"`);
    const y = 21 + (i - 1) * step;
    grid += line(0, y, 3000, y, `stroke="${i % 5 === 4 ? "#171717" : "#1c1c1c"}" stroke-width="1.200"`);
  }
  document.getElementById("node-grid").innerHTML = grid;

  // Floor grid: world x/y projected onto the viewport
  const project = (x, y) => {
    const w = 1 - 0.0537 * x + 0.0771 * y;
    return [(1216 - 8.7 * x + 129.67 * y) / w, (473.5 - 9.88 * x + 14.2 * y) / w];
  };
  let floor = "";
  for (let k = -50; k <= 50; k++) {
    if (k === 0) continue;
    const extra = k % 10 === 0 ? 'stroke="#585858"' : "";
    const y0 = (0.08 - 1 + 0.0537 * k) / 0.0771;
    floor += line(...project(k, y0), ...project(k, 60), extra);
    const x0 = (0.92 + 0.0771 * k) / 0.0537;
    if (x0 > -60) floor += line(...project(-60, k), ...project(x0, k), extra);
  }
  document.getElementById("floor").innerHTML = floor;

  // Gaps between strands: top x, bottom x, width
  const slits = [
    [1117, 1130, 1], [1120, 1132, 1.5], [1123, 1134, 1], [1127, 1136, 1.8], [1138, 1144, 0.8], [1143, 1148, 0.6],
    [1156.5, 1161, 1], [1159.5, 1163, 1], [1259, 1245, 0.8],
    [1281.5, 1264, 1.5], [1287, 1268, 0.8], [1292, 1273, 0.8], [1301, 1282, 1.2], [1305, 1286, 1], [1309, 1289, 1],
    [1313, 1292, 1.5], [1318, 1295, 1.8], [1322, 1298, 1], [1326, 1301, 1.5], [1330, 1303, 1]
  ];
  document.getElementById("slits").innerHTML = slits.map(([a, b, w]) => line(a, 166, b, 468, `stroke-width="${w}"`)).join("");
</script>

</body>
</html>
